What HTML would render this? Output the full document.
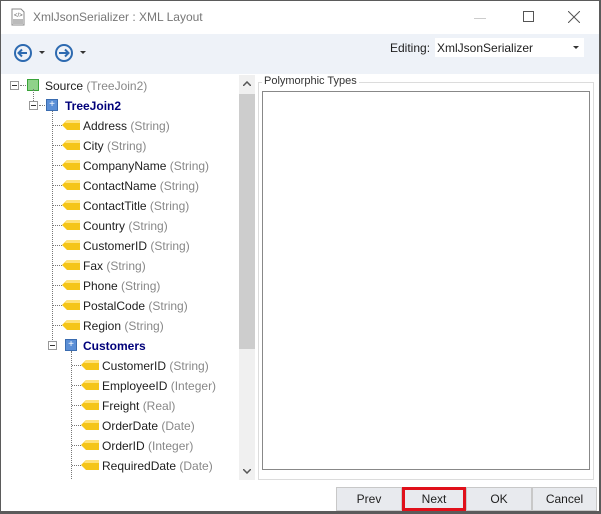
<!DOCTYPE html>
<html><head><style>
*{margin:0;padding:0;box-sizing:border-box}
body{width:601px;height:514px;background:#5b5b5b;position:relative;overflow:hidden;font-family:"Liberation Sans",sans-serif;font-size:12px;color:#1e1e1e}
.win{position:absolute;left:1px;top:1px;width:598px;height:510px;background:#fff}
.tb{position:absolute;left:0;top:33px;width:598px;height:40px;background:#eef2f8}
.abs{position:absolute}
.row{position:absolute;height:16px;line-height:16px;white-space:nowrap}
.g{color:#888}
.b{color:#00007a;font-weight:bold}
.tag{position:absolute;width:18px;height:10px}
.hd{position:absolute;border-top:1px dotted #777;height:0}
.vd{position:absolute;border-left:1px dotted #777;width:0}
.exp{position:absolute;width:9px;height:9px;border:1px solid #999;background:#fff}
.exp:after{content:"";position:absolute;left:1px;top:3px;width:5px;height:1px;background:#333}
.btn{position:absolute;top:487px;height:24px;background:#e8eaee;border:1px solid #c8c8c8;text-align:center;line-height:22px;font-size:12px}
</style></head><body>
<div class="win">
<svg class="abs" style="left:10px;top:7px" width="14" height="18"><path d="M1 1h9l3 3v13H1z" fill="#fff" stroke="#888"/><rect x="2" y="11" width="10" height="5" fill="#bbb"/><text x="3" y="9" font-size="6" fill="#555">&lt;/&gt;</text></svg>
<div class="abs" style="left:32px;top:9px;font-size:12px;color:#777">XmlJsonSerializer : XML Layout</div>
<div class="abs" style="left:473px;top:17px;width:12px;height:1px;background:#ccc"></div>
<div class="abs" style="left:522px;top:10px;width:11px;height:11px;border:1px solid #555"></div>
<svg class="abs" style="left:567px;top:10px" width="12" height="12"><path d="M0 0L12 12M12 0L0 12" stroke="#555"/></svg>
<div class="tb">
<svg class="abs" style="left:12px;top:9px" width="20" height="20"><circle cx="10" cy="10" r="8" fill="none" stroke="#2d6ab0" stroke-width="2"/><path d="M14 10H6M9 6.5L5.5 10L9 13.5" fill="none" stroke="#2d6ab0" stroke-width="2"/></svg>
<svg class="abs" style="left:38px;top:17px" width="6" height="4"><path d="M0 0h6L3 3z" fill="#333"/></svg>
<svg class="abs" style="left:53px;top:9px" width="20" height="20"><circle cx="10" cy="10" r="8" fill="none" stroke="#2d6ab0" stroke-width="2"/><path d="M5 10H14M11 6.5L14.5 10L11 13.5" fill="none" stroke="#2d6ab0" stroke-width="2"/></svg>
<svg class="abs" style="left:79px;top:17px" width="6" height="4"><path d="M0 0h6L3 3z" fill="#333"/></svg>
<div class="abs" style="left:389px;top:7px;font-size:12px">Editing:</div>
<div class="abs" style="left:434px;top:4px;width:149px;height:19px;background:#fff;padding:3px 2px;font-size:12px">XmlJsonSerializer</div>
<svg class="abs" style="left:572px;top:12px" width="6" height="4"><path d="M0 0h6L3 3z" fill="#333"/></svg>
</div>
</div>
<!-- tree -->
<div class="abs" style="left:2px;top:75px;width:252px;height:405px;background:#fff;overflow:hidden">
<div class="exp" style="left:8px;top:6px"></div>
<div class="hd" style="left:18px;top:10px;width:8px"></div>
<div class="abs" style="left:25px;top:4px;width:12px;height:12px;background:#8fd28a;border:1px solid #3aa33a"></div>
<div class="row" style="left:43px;top:3px">Source <span class="g">(TreeJoin2)</span></div>
<div class="vd" style="left:31px;top:14px;height:12px"></div>
<div class="exp" style="left:27px;top:26px"></div>
<div class="hd" style="left:37px;top:30px;width:6px"></div>
<div class="abs" style="left:44px;top:24px;width:12px;height:12px;background:#5b8fd6;border:1px solid #3a6cb0;color:#fff;font-size:10px;line-height:9px;text-align:center">+</div>
<div class="row b" style="left:63px;top:23px">TreeJoin2</div>
<div class="vd" style="left:50px;top:36px;height:235px"></div>
<div class="vd" style="left:69px;top:276px;height:130px"></div>
<div class="exp" style="left:46px;top:266px"></div>
<div class="abs" style="left:63px;top:264px;width:12px;height:12px;background:#5b8fd6;border:1px solid #3a6cb0;color:#fff;font-size:10px;line-height:9px;text-align:center">+</div>
<div class="row b" style="left:81px;top:263px">Customers</div>
<div id="t"></div>
</div>
<script>
var L=[["Address","String"],["City","String"],["CompanyName","String"],["ContactName","String"],["ContactTitle","String"],["Country","String"],["CustomerID","String"],["Fax","String"],["Phone","String"],["PostalCode","String"],["Region","String"]];
var C=[["CustomerID","String"],["EmployeeID","Integer"],["Freight","Real"],["OrderDate","Date"],["OrderID","Integer"],["RequiredDate","Date"],["",""]];
var h="";
function tag(x,y){return '<svg class="tag" style="left:'+x+'px;top:'+y+'px" width="18" height="10"><path d="M5 0H18V10H5L0 5z" fill="#f5c518"/><path d="M5 0H18V3H3z" fill="#ffe27a"/></svg>';}
L.forEach(function(a,i){var y=43+i*20;h+='<div class="hd" style="left:51px;top:'+(y+7)+'px;width:9px"></div>'+tag(60,y+2)+'<div class="row" style="left:81px;top:'+y+'px">'+a[0]+' <span class="g">('+a[1]+')</span></div>';});
C.forEach(function(a,i){var y=283+i*20;h+='<div class="hd" style="left:70px;top:'+(y+7)+'px;width:9px"></div>'+tag(79,y+2)+(a[0]?'<div class="row" style="left:100px;top:'+y+'px">'+a[0]+' <span class="g">('+a[1]+')</span></div>':'');});
document.getElementById("t").outerHTML=h;
</script>
<!-- scrollbar -->
<div class="abs" style="left:239px;top:75px;width:16px;height:405px;background:#f0f0f0"></div>
<div class="abs" style="left:239px;top:94px;width:16px;height:255px;background:#cdcdcd"></div>
<svg class="abs" style="left:243px;top:81px" width="8" height="5"><path d="M0 5L4 1L8 5" fill="none" stroke="#555" stroke-width="1.5"/></svg>
<svg class="abs" style="left:243px;top:469px" width="8" height="5"><path d="M0 0L4 4L8 0" fill="none" stroke="#555" stroke-width="1.5"/></svg>
<!-- group -->
<div class="abs" style="left:258px;top:82px;width:336px;height:398px;border:1px solid #dcdcdc"></div>
<div class="abs" style="left:262px;top:75px;background:#fff;padding:0 2px;font-size:11px;color:#333">Polymorphic Types</div>
<div class="abs" style="left:262px;top:91px;width:328px;height:379px;border:1px solid #888"></div>
<div class="btn" style="left:336px;width:66px">Prev</div>
<div class="btn" style="left:402px;width:64px;border:3px solid #e0101a;line-height:18px;background:#e8eaee">Next</div>
<div class="btn" style="left:466px;width:66px">OK</div>
<div class="btn" style="left:532px;width:65px">Cancel</div>
</body></html>
